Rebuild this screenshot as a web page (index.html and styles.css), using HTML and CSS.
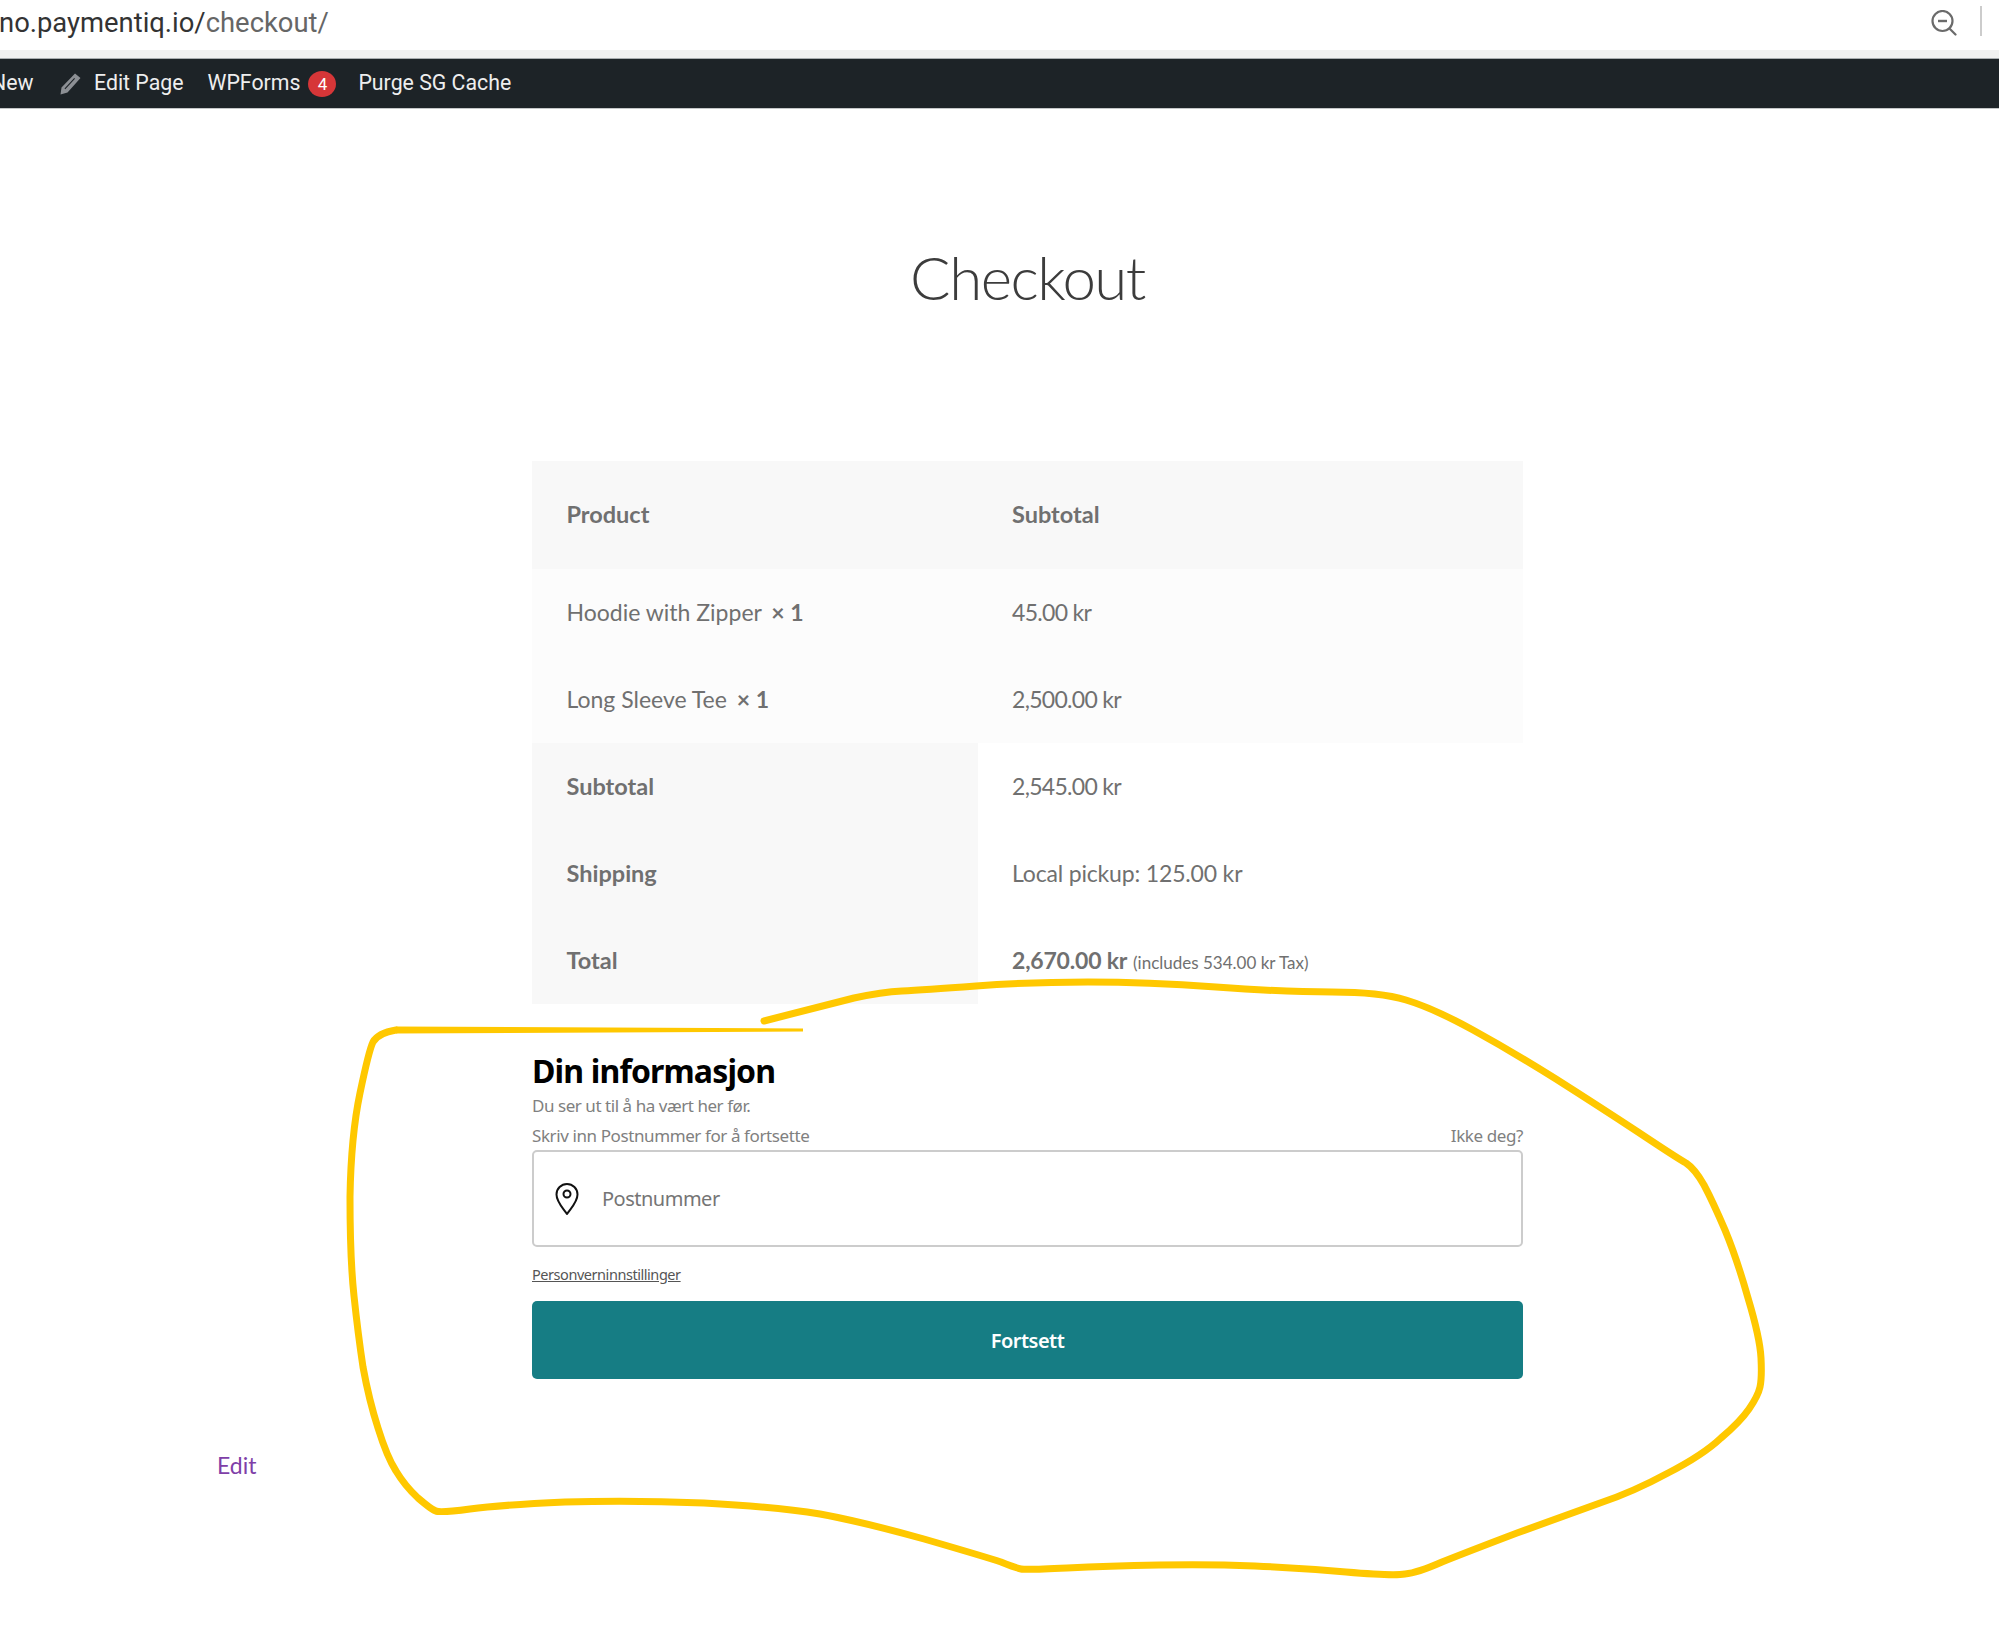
FILE: index.html
```html
<!DOCTYPE html>
<html>

<head>
  <title>Checkout</title>
  <link rel="stylesheet" href="styles.css">
</head>

<body>
  <div class="browser-bar">
    <div class="url"><span class="url-host">no.paymentiq.io/</span>checkout/</div>
    <svg class="zoom-icon" width="26" height="26" viewBox="0 0 26 26" fill="none" stroke="#6b6b6b" stroke-width="2.2">
      <circle cx="11.5" cy="11" r="10"/>
      <path d="M7 11h9" stroke-width="2.4"/>
      <path d="M18.5 18.5l6 6" stroke-linecap="round"/>
    </svg>
    <div class="browser-sep"></div>
  </div>
  <div class="browser-strip"></div>

  <div class="admin-bar">
    <span class="admin-new">New</span>
    <svg class="admin-pencil" width="22" height="22" viewBox="0 0 22 22">
      <path fill="#8c8f94" d="M16 0.500L21.500 5 8.500 19.500 1.500 21.500 2.500 14.500zM15.200 5L5.500 15.500l0.800 0.800L16 5.800z" fill-rule="evenodd"/>
    </svg>
    <span class="admin-item">Edit Page</span>
    <span class="admin-item admin-forms">WPForms</span>
    <span class="admin-badge">4</span>
    <span class="admin-item admin-purge">Purge SG Cache</span>
  </div>

  <h1 class="page-title">Checkout</h1>

  <div class="content">
    <table class="order">
      <thead>
        <tr class="row-head">
          <th class="col-name">Product</th>
          <th>Subtotal</th>
        </tr>
      </thead>
      <tbody>
        <tr class="row-item">
          <td>Hoodie with Zipper <b class="qty">× 1</b></td>
          <td class="price">45.00 kr</td>
        </tr>
        <tr class="row-item">
          <td>Long Sleeve Tee <b class="qty">× 1</b></td>
          <td class="price">2,500.00 kr</td>
        </tr>
      </tbody>
      <tfoot>
        <tr>
          <th>Subtotal</th>
          <td class="price">2,545.00 kr</td>
        </tr>
        <tr>
          <th>Shipping</th>
          <td class="shipping">Local pickup: 125.00 kr</td>
        </tr>
        <tr>
          <th>Total</th>
          <td><b class="total">2,670.00 kr</b> <small class="tax">(includes 534.00 kr Tax)</small></td>
        </tr>
      </tfoot>
    </table>

    <div class="info">
      <h2 class="info-title">Din informasjon</h2>
      <p class="info-sub">Du ser ut til å ha vært her før.</p>
      <div class="info-labels">
        <span>Skriv inn Postnummer for å fortsette</span>
        <span>Ikke deg?</span>
      </div>
      <div class="zip-field">
        <svg class="zip-pin" width="24" height="32" viewBox="0 0 24 32" fill="none" stroke="#111" stroke-width="2">
          <path d="M12 31C8 25 1.500 19 1.500 11.500a10.500 10.500 0 0 1 21 0C22.500 19 16 25 12 31z" stroke-linejoin="round"/>
          <circle cx="12" cy="11" r="3.500"/>
        </svg>
        <span class="zip-placeholder">Postnummer</span>
      </div>
      <a class="privacy" href="#">Personverninnstillinger</a>
      <button class="continue">Fortsett</button>
    </div>
  </div>

  <a class="edit-link" href="#">Edit</a>

  <svg class="scribble" width="1999" height="1649" viewBox="0 0 1999 1649" fill="none" stroke="#ffc800" stroke-linecap="round" stroke-linejoin="round">
    <path stroke-width="7" d="M764 1021Q826 1005 854 998Q882 992 902 991Q923 990 976 986Q1030 982 1088 982Q1147 982 1216 987Q1285 992 1332 992Q1380 992 1406 1000Q1433 1008 1473 1030Q1513 1052 1556 1079Q1600 1107 1638 1132Q1677 1158 1686 1163Q1695 1169 1704 1185Q1713 1202 1725 1230Q1737 1259 1748 1298Q1760 1338 1761 1358Q1762 1378 1760 1387Q1758 1396 1749 1409Q1740 1422 1721 1438Q1703 1455 1668 1473Q1633 1492 1600 1503Q1567 1515 1517 1533Q1467 1552 1442 1562Q1417 1573 1405 1574Q1393 1576 1346 1572Q1300 1568 1255 1566Q1210 1564 1159 1565Q1108 1566 1067 1568Q1026 1570 1021 1569Q1016 1568 1001 1562Q986 1557 924 1539Q863 1522 820 1514Q776 1507 704 1503Q632 1500 565 1502Q499 1505 470 1509Q440 1513 436 1511Q432 1510 418 1498Q405 1486 396 1471Q387 1457 378 1428Q369 1400 363 1367Q358 1334 354 1296Q350 1259 350 1197Q351 1136 360 1093Q369 1050 373 1042Q378 1033 396 1030"/>
    <path fill="#ffc800" stroke="none" d="M396 1026.500L803 1028.500V1031.500L396 1033.500z"/>
  </svg>
</body>

</html>
```

FILE: styles.css
```css
html, body {
  margin: 0;
  height: 1649px;
  overflow: hidden;
  background: #fff;
}

body {
  font-family: 'Lato', sans-serif;
  color: #707070;
  position: relative;
}

/* browser chrome */
.browser-bar {
  height: 50px;
  display: flex;
  align-items: center;
  background: #fff;
  overflow: hidden;
}

.url {
  font-family: 'Roboto', sans-serif;
  font-size: 27.400px;
  color: #666;
  margin-left: -1px;
  margin-top: -4px;
}

.url-host {
  color: #333;
}

.zoom-icon {
  margin-left: auto;
  margin-top: -5px;
}

.browser-sep {
  width: 2px;
  height: 30px;
  background: #ccc;
  margin: -8px 17px 0 23px;
}

.browser-strip {
  height: 8px;
  background: #f1f1f1;
  border-bottom: 1px solid #a9adb0;
}

/* admin bar */
.admin-bar {
  height: 49px;
  display: flex;
  align-items: center;
  background: #1d2327;
  border-bottom: 1px solid #c4c6c8;
  color: #eee;
  font-family: 'Roboto', sans-serif;
  font-size: 21.300px;
}

.admin-item,
.admin-new {
  margin-top: -2px;
}

.admin-new {
  margin-left: -9px;
}

.admin-pencil {
  margin-left: 25.500px;
  margin-right: 13px;
}

.admin-forms {
  margin-left: 24px;
}

.admin-badge {
  width: 28px;
  height: 26px;
  margin-left: 8px;
  border-radius: 50%;
  background: #d63638;
  color: #fff;
  font-size: 17px;
  display: flex;
  align-items: center;
  justify-content: center;
}

.admin-purge {
  margin-left: 22px;
}

/* page */
.page-title {
  margin: 132px 0 0;
  height: 220px;
  font-size: 60px;
  font-weight: 300;
  line-height: 72px;
  letter-spacing: -1.500px;
  color: #3c3c3c;
  text-align: center;
  padding-left: 56px;
  box-sizing: border-box;
}

.content {
  width: 991px;
  margin-left: 532px;
}

.order {
  width: 991px;
  border-collapse: collapse;
  table-layout: fixed;
  font-size: 23px;
}

.order th,
.order td {
  padding: 0 0 2px 34.500px;
  text-align: left;
  height: 85px;
}

.order th {
  font-weight: 700;
  font-size: 23.500px;
}

.col-name {
  width: 411px;
}

.row-head th {
  height: 106px;
  background: #f8f8f8;
}

.row-item td {
  background: #fcfcfc;
}

.order tfoot th {
  background: #f8f8f8;
}

.qty {
  margin-left: 4px;
}

.price {
  letter-spacing: -0.700px;
}

.shipping {
  letter-spacing: -0.170px;
}

.total {
  letter-spacing: -0.200px;
}

.tax {
  font-size: 17px;
}

.info {
  font-family: 'Noto Sans', sans-serif;
  font-size: 17px;
  color: #808080;
}

.info-title {
  margin: 0;
  padding-top: 45px;
  font-size: 32px;
  line-height: 44px;
  font-weight: 700;
  letter-spacing: -0.850px;
  color: #000;
}

.info-sub {
  margin: 0;
  line-height: 24px;
  padding-top: 1px;
  letter-spacing: -0.450px;
}

.info-labels {
  display: flex;
  justify-content: space-between;
  line-height: 24px;
  padding-top: 6px;
  letter-spacing: -0.400px;
}

.zip-field {
  height: 97px;
  margin-top: 2px;
  border: 2px solid #ccc;
  border-radius: 5px;
  box-sizing: border-box;
  display: flex;
  align-items: center;
  padding-left: 21px;
}

.zip-placeholder {
  margin-left: 23px;
  font-size: 20px;
  letter-spacing: -0.500px;
  color: #757575;
}

.privacy {
  display: block;
  margin-top: 17px;
  font-size: 14.500px;
  line-height: 20px;
  letter-spacing: -0.450px;
  color: #555;
}

.continue {
  display: block;
  width: 100%;
  height: 78px;
  margin-top: 17px;
  border: none;
  border-radius: 5px;
  background: #167d84;
  color: #fff;
  font-family: inherit;
  font-size: 20px;
  font-weight: 600;
  letter-spacing: -0.500px;
}

.edit-link {
  display: block;
  width: max-content;
  margin: 72px 0 0 217px;
  font-size: 23px;
  line-height: 28px;
  color: #7f3fa8;
  text-decoration: none;
}

.scribble {
  position: absolute;
  top: 0;
  left: 0;
  pointer-events: none;
}
```
